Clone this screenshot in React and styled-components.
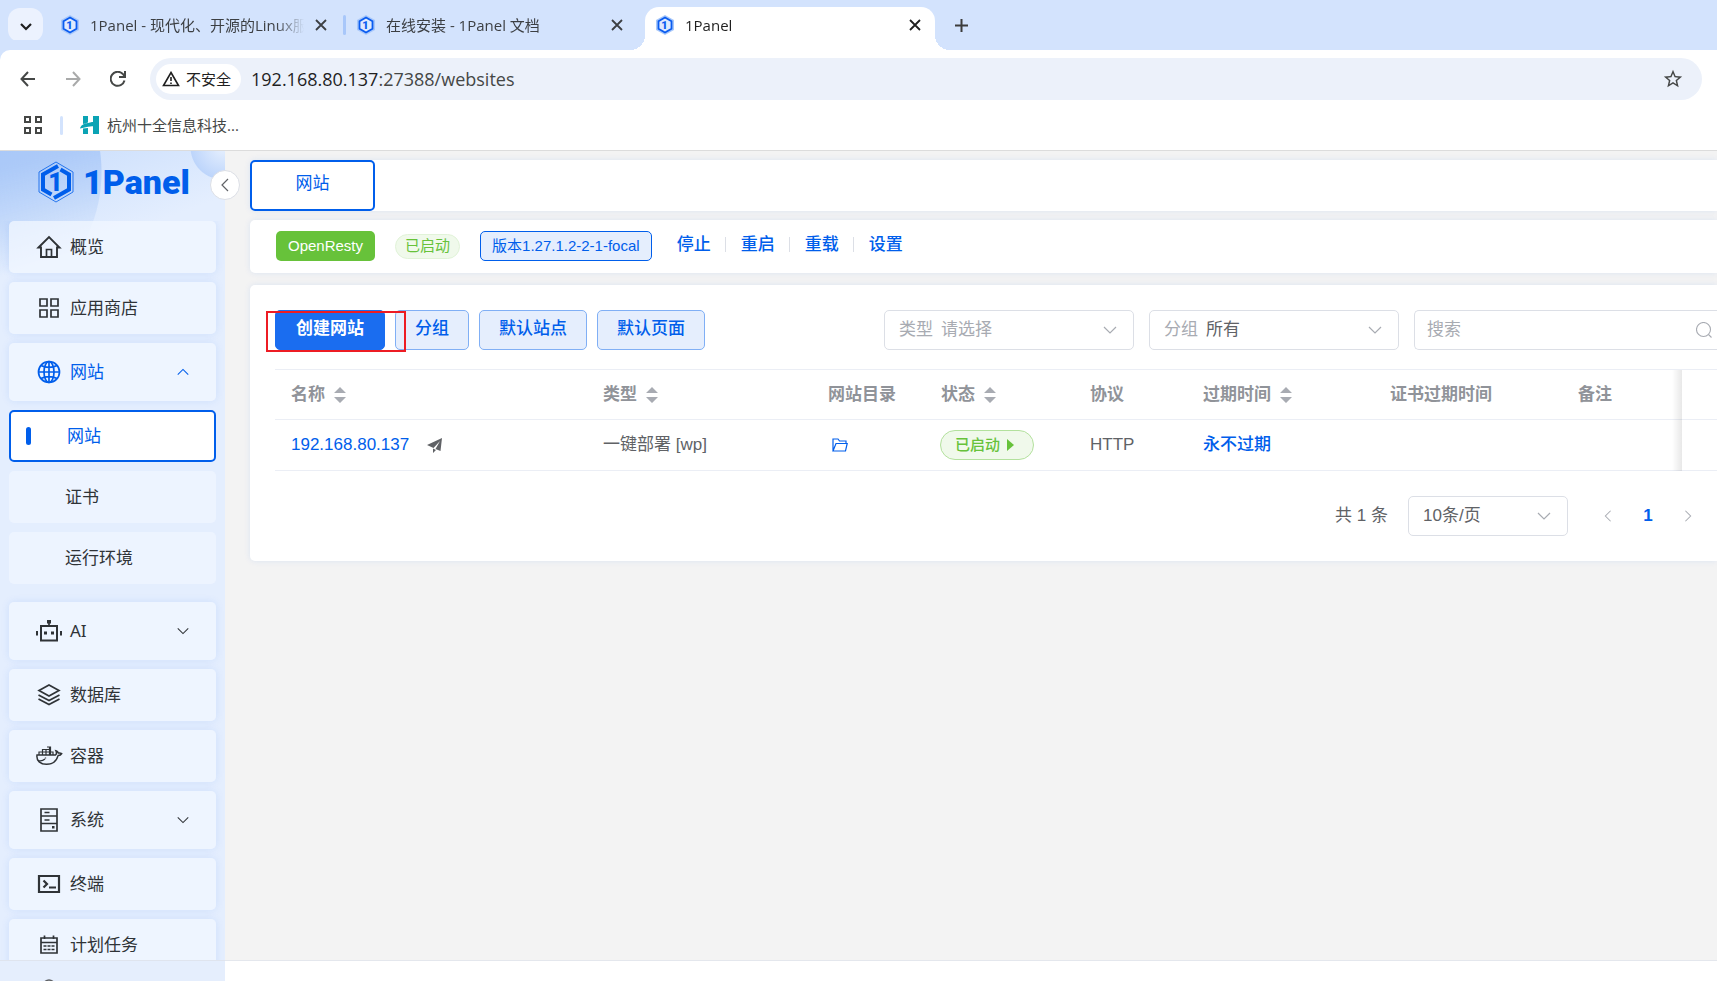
import React, { useState } from "react";
import styled, { createGlobalStyle } from "styled-components";
import { MdStarOutline } from "react-icons/md";

const tabs = [
  { title: "1Panel - 现代化、开源的Linux服", width: 291 },
  { title: "在线安装 - 1Panel 文档", width: 291 },
  { title: "1Panel", width: 290, active: true },
];

const menu = [
  { label: "概览", icon: "home" },
  { label: "应用商店", icon: "apps" },
  { label: "网站", icon: "globe", open: true, children: ["网站", "证书", "运行环境"] },
  { label: "AI", icon: "robot", group: true },
  { label: "数据库", icon: "layers" },
  { label: "容器", icon: "docker" },
  { label: "系统", icon: "server", group: true },
  { label: "终端", icon: "terminal" },
  { label: "计划任务", icon: "calendar" },
];

const columns = [
  { label: "名称", width: 312, sortable: true },
  { label: "类型", width: 225, sortable: true },
  { label: "网站目录", width: 113 },
  { label: "状态", width: 149, sortable: true },
  { label: "协议", width: 113 },
  { label: "过期时间", width: 187, sortable: true },
  { label: "证书过期时间", width: 188 },
  { label: "备注", width: 120 },
  { label: "", width: 35, fixed: true },
];

const icons = {
  home: (
    <>
      <path d="M1.5 12.500 12 2l10.500 10.500H20V22H4v-9.500z" strokeWidth="1.900" />
      <path d="M9.500 22v-7.500h5V22" />
    </>
  ),
  apps: <path d="M3 3h7v7H3zM14 3h7v7h-7zM3 14h7v7H3zM14 14h7v7h-7z" />,
  globe: (
    <>
      <circle cx="12" cy="12" r="10.500" />
      <ellipse cx="12" cy="12" rx="5" ry="10.500" />
      <path d="M12 1.500v21M1.500 12h21M4 5.500c4.500 2.500 11.500 2.500 16 0M4 18.500c4.500-2.500 11.500-2.500 16 0" />
    </>
  ),
  robot: (
    <>
      <path d="M4 7h16v14.500H4z" strokeWidth="2" />
      <path d="M12 7V4" />
      <path d="M10 1h4v3.500h-4zM7 12.500h3v3H7zM14 12.500h3v3h-3zM-1 12h2v4.500h-2zM23 12h2v4.500h-2z" fill="currentColor" stroke="none" />
    </>
  ),
  layers: (
    <>
      <path d="M12 2 22 7.500 12 13 2 7.500z" />
      <path d="M1.500 12 12 17.500 22.500 12M1.500 16 12 21.500 22.500 16" />
    </>
  ),
  docker: (
    <>
      <path d="M0 11h18.500c1-.8 1.300-2.200.4-4.200 1.500.4 2.200 1.400 2.500 2.300 1.200-.3 2.300-.1 3.300.6-.6 1.200-1.900 1.900-3.600 1.900C19.500 17 15.500 20.300 9.500 20.300 3.500 20.300-.8 17 0 11z" strokeWidth="1.500" />
      <path d="M2 11V8h3.500v3M5.500 8V5.500h7V11M9 5.500V11M5.500 8H16v3M12.500 5.500V3H10M12.500 3h1v8" strokeWidth="1.200" />
      <path d="M1 16.500c2.500.8 5 .2 7-1.500M8.500 13.500v1" strokeWidth="1.300" />
    </>
  ),
  server: (
    <>
      <path d="M4 1h16v22H4zM4 8h16M4 15.500h16M7.500 4.500h5M7.500 12h5" />
      <path d="M15 18h2.500v2.500H15z" fill="currentColor" stroke="none" />
    </>
  ),
  terminal: (
    <>
      <path d="M2 4h20v16H2z" strokeWidth="2.200" />
      <path d="m6.500 8.500 3.500 3.500-3.500 3.500M12 15.500h7" strokeWidth="2.200" />
    </>
  ),
  calendar: (
    <>
      <path d="M4 5h16v15H4zM4 9.500h16M7.500 2.500V6M16.500 2.500V6" />
      <path d="M6.500 13h3M10.500 13h3M14.500 13h3M6.500 16.500h3M10.500 16.500h3M14.500 16.500h3" />
    </>
  ),
  user: <circle cx="12" cy="7" r="5" />,
};

const MenuIcon = ({ name }) => (
  <svg width="24" height="24" viewBox="0 0 24 24" fill="none" stroke="currentColor" strokeWidth="1.700" overflow="visible">
    {icons[name]}
  </svg>
);

const arrows = {
  down: "M2 5l6 6 6-6",
  up: "M2 11l6-6 6 6",
  left: "M11 2L5 8l6 6",
  right: "M5 2l6 6-6 6",
};

const Arrow = ({ dir, size = 16 }) => (
  <svg width={size} height={size} viewBox="0 0 16 16" fill="none" stroke="currentColor" strokeWidth="1.200">
    <path d={arrows[dir]} />
  </svg>
);

const Favicon = () => (
  <svg width="18" height="20" viewBox="0 0 18 20">
    <path d="M9 0l9 5v10l-9 5-9-5V5z" fill="#a8c8fa" />
    <path d="M9 2.500l6.500 3.800v7.400L9 17.500l-6.500-3.800V6.300z" fill="#dfeafd" stroke="#0a5cf0" strokeWidth="1.800" />
    <text x="8.500" y="14" textAnchor="middle" fontFamily="Roboto, sans-serif" fontWeight="900" fontSize="11" fill="#0a5cf0">1</text>
  </svg>
);

const LogoMark = () => (
  <svg width="36" height="42" viewBox="0 0 36 42" fill="none" stroke="#005eeb">
    <path d="M18 1l17 10v20L18 41 1 31V11z" strokeWidth="0.800" />
    <path d="M20 5 5 13.500v15l8.500 5M16 37l15-8.500v-15L22.500 8.500" strokeWidth="4" />
    <text x="17.500" y="30" textAnchor="middle" fontFamily="Roboto, sans-serif" fontWeight="900" fontSize="25" fill="#005eeb" stroke="none">1</text>
  </svg>
);

const CloseIcon = () => (
  <svg width="12" height="12" viewBox="0 0 12 12" stroke="currentColor" strokeWidth="1.800">
    <path d="M1 1l10 10M11 1L1 11" />
  </svg>
);

const Sort = () => (
  <svg width="12" height="16" viewBox="0 0 12 16" fill="#a8abb2">
    <path d="M6 0l6 6H0zM6 16l6-6H0z" />
  </svg>
);

const BrowserTabs = () => (
  <TabStrip>
    <TabSearch aria-label="搜索标签页">
      <svg width="12" height="8" viewBox="0 0 12 8" fill="none" stroke="#1f1f1f" strokeWidth="2.200">
        <path d="M1 1l5 5 5-5" />
      </svg>
    </TabSearch>
    {tabs.map((tab, i) => (
      <React.Fragment key={tab.title}>
        {i === 1 && <TabDivider />}
        <BrowserTab $width={tab.width} $active={tab.active}>
          <Favicon />
          <TabTitle>{tab.title}</TabTitle>
          <IconButton aria-label="关闭">
            <CloseIcon />
          </IconButton>
        </BrowserTab>
      </React.Fragment>
    ))}
    <NewTab aria-label="新标签页">
      <svg width="13" height="13" viewBox="0 0 13 13" stroke="#3c3c3c" strokeWidth="2">
        <path d="M6.500 0v13M0 6.500h13" />
      </svg>
    </NewTab>
  </TabStrip>
);

const AddressBar = () => (
  <Toolbar>
    <IconButton aria-label="后退">
      <svg width="16" height="16" viewBox="0 0 16 16" fill="none" stroke="#454746" strokeWidth="2">
        <path d="M15 8H2M8 1L1.500 8 8 15" />
      </svg>
    </IconButton>
    <IconButton aria-label="前进" disabled>
      <svg width="16" height="16" viewBox="0 0 16 16" fill="none" stroke="#a9aaaa" strokeWidth="2">
        <path d="M1 8h13M8 1l6.500 7L8 15" />
      </svg>
    </IconButton>
    <IconButton aria-label="重新加载">
      <svg width="16" height="16" viewBox="0 0 16 16" fill="none" stroke="#454746" strokeWidth="2">
        <path d="M14.500 9.500A7 7 0 1 1 13 3.200L14.500 5M15 0v6H9" />
      </svg>
    </IconButton>
    <Omnibox>
      <SiteChip>
        <svg width="18" height="16" viewBox="0 0 18 16" fill="none" stroke="#1f1f1f" strokeWidth="1.600">
          <path d="M9 1.500L16.500 14.500h-15zM9 6v4M9 11.500v1.500" />
        </svg>
        不安全
      </SiteChip>
      <Url>
        192.168.80.137<span>:27388/websites</span>
      </Url>
      <IconButton aria-label="收藏">
        <MdStarOutline size={22} />
      </IconButton>
    </Omnibox>
  </Toolbar>
);

const Bookmarks = () => (
  <BookmarkBar>
    <svg width="18" height="18" viewBox="0 0 18 18" fill="none" stroke="#454746" strokeWidth="2">
      <path d="M1 1h5v5H1zM12 1h5v5h-5zM1 12h5v5H1zM12 12h5v5h-5z" />
    </svg>
    <BookmarkDivider />
    <BookmarkLink href="#hz">
      <svg width="19" height="18" viewBox="0 0 19 18" fill="#0aa3b4">
        <path d="M3 0h5v6.500L3 8zM3 12.500l5-.5v6H3zM13 0h6v18h-6zM0 12.500C1 9 4 7.500 8 7l6-1.500V10L8 10.800z" />
      </svg>
      杭州十全信息科技...
    </BookmarkLink>
  </BookmarkBar>
);

const SideMenu = () => {
  const [current, setCurrent] = useState("网站");
  return (
    <Sidebar>
      <Brand>
        <LogoMark />
        1Panel
      </Brand>
      <Collapse aria-label="收起菜单">
        <Arrow dir="left" />
      </Collapse>
      <MenuList>
        {menu.map((item) => (
          <React.Fragment key={item.label}>
            <MenuItem $tall={item.group || item.open} $open={item.open}>
              <MenuIconBox>
                <MenuIcon name={item.icon} />
              </MenuIconBox>
              <span>{item.label}</span>
              {item.open && <Arrow dir="up" size={14} />}
              {item.group && <Arrow dir="down" size={14} />}
            </MenuItem>
            {item.children && (
              <SubMenu>
                {item.children.map((label) => (
                  <SubItem key={label} $active={label === current} onClick={() => setCurrent(label)}>
                    {label}
                  </SubItem>
                ))}
              </SubMenu>
            )}
          </React.Fragment>
        ))}
      </MenuList>
      <SideFooter>
        <MenuIcon name="user" />
      </SideFooter>
    </Sidebar>
  );
};

const SiteTable = () => (
  <Table>
    <colgroup>
      {columns.map((col) => (
        <Col key={col.label} $width={col.width} />
      ))}
    </colgroup>
    <thead>
      <tr>
        {columns.map((col) => (
          <HeadCell key={col.label} $fixed={col.fixed}>
            <HeadLabel>
              {col.label}
              {col.sortable && <Sort />}
            </HeadLabel>
          </HeadCell>
        ))}
      </tr>
    </thead>
    <tbody>
      <tr>
        <Cell>
          <NameCell>
            <SiteLink href="#site">192.168.80.137</SiteLink>
            <svg width="15" height="15" viewBox="0 0 15 15" fill="#606266">
              <path d="M15 0L13.500 13 8.500 11 13 3 6.500 10 0 7zM6 10.500l3 1.500-3 3z" />
            </svg>
          </NameCell>
        </Cell>
        <Cell>一键部署 [wp]</Cell>
        <Cell>
          <FolderButton aria-label="网站目录">
            <svg width="16" height="14" viewBox="0 0 16 14" fill="none" stroke="#005eeb" strokeWidth="1.200">
              <path d="M1 13V1h5l1.500 2H14v2M1 13L4 5.500h11.200L13.500 13z" />
            </svg>
          </FolderButton>
        </Cell>
        <Cell>
          <StatusButton>
            已启动
            <svg width="7" height="12" viewBox="0 0 7 12" fill="#67c23a">
              <path d="M0 0l7 6-7 6z" />
            </svg>
          </StatusButton>
        </Cell>
        <Cell>HTTP</Cell>
        <Cell>
          <SiteLink href="#expire" $strong>永不过期</SiteLink>
        </Cell>
        <Cell />
        <Cell />
        <Cell $fixed />
      </tr>
    </tbody>
  </Table>
);

const App = () => {
  return (
    <Page>
      <GlobalStyle />
      <BrowserTabs />
      <Chrome>
        <AddressBar />
        <Bookmarks />
      </Chrome>
      <Body>
        <SideMenu />
        <Main>
          <Content>
            <RouterBar>
              <RouterButton>网站</RouterButton>
            </RouterBar>
            <AppStatus>
              <AppTag>OpenResty</AppTag>
              <RunningTag>已启动</RunningTag>
              <VersionTag>版本1.27.1.2-2-1-focal</VersionTag>
              <Actions>
                <ActionLink>停止</ActionLink>
                <ActionLink>重启</ActionLink>
                <ActionLink>重载</ActionLink>
                <ActionLink>设置</ActionLink>
              </Actions>
            </AppStatus>
            <Card>
              <Tools>
                <Highlight>
                  <Button $primary>创建网站</Button>
                </Highlight>
                <Button>分组</Button>
                <Button>默认站点</Button>
                <Button>默认页面</Button>
                <Filters>
                  <SelectBox $width={250}>
                    <span>类型</span>
                    <Select $muted defaultValue="">
                      <option value="">请选择</option>
                    </Select>
                    <Arrow dir="down" />
                  </SelectBox>
                  <SelectBox $width={250}>
                    <span>分组</span>
                    <Select defaultValue="all">
                      <option value="all">所有</option>
                    </Select>
                    <Arrow dir="down" />
                  </SelectBox>
                  <SearchBox>
                    <input placeholder="搜索" aria-label="搜索" />
                    <svg width="16" height="16" viewBox="0 0 16 16" fill="none" stroke="#a8abb2" strokeWidth="1.100">
                      <circle cx="7.500" cy="7.500" r="7" />
                      <path d="M12.500 12.500l3 3" />
                    </svg>
                  </SearchBox>
                </Filters>
              </Tools>
              <SiteTable />
              <Pagination>
                <span>共 1 条</span>
                <SelectBox $width={160}>
                  <Select aria-label="每页条数" defaultValue="10">
                    <option value="10">10条/页</option>
                  </Select>
                  <Arrow dir="down" />
                </SelectBox>
                <Pager>
                  <PageButton aria-label="上一页" disabled>
                    <Arrow dir="left" size={14} />
                  </PageButton>
                  <PageButton $current>1</PageButton>
                  <PageButton aria-label="下一页" disabled>
                    <Arrow dir="right" size={14} />
                  </PageButton>
                </Pager>
              </Pagination>
            </Card>
          </Content>
          <Footer />
        </Main>
      </Body>
    </Page>
  );
};

export default App;

const GlobalStyle = createGlobalStyle`
  * {
    box-sizing: border-box;
  }
  body {
    margin: 0;
    font-family: "Liberation Sans", "Noto Sans CJK SC", sans-serif;
    font-size: 17px;
    line-height: 24px;
    color: #606266;
  }
  button, input, select {
    font: inherit;
    color: inherit;
  }
  button {
    cursor: pointer;
  }
  svg {
    flex-shrink: 0;
  }
`;

const Page = styled.div`
  height: 100vh;
  display: flex;
  flex-direction: column;
  overflow: hidden;
`;

const TabStrip = styled.header`
  height: 50px;
  flex-shrink: 0;
  display: flex;
  align-items: center;
  padding: 0 8px;
  background: #d3e3fd;
  font-family: "Open Sans", "Noto Sans CJK SC", sans-serif;
  font-size: 15px;
  color: #3c3f43;
`;

const TabSearch = styled.button`
  width: 35px;
  height: 34px;
  margin-right: 7px;
  border: none;
  border-radius: 12px;
  background: #ecf2fe;
`;

const BrowserTab = styled.div`
  position: relative;
  display: flex;
  align-items: center;
  gap: 11px;
  width: ${(p) => p.$width}px;
  height: 43px;
  margin-left: ${(p) => (p.$active ? 8 : 0)}px;
  align-self: flex-end;
  padding: 0 14px 7px 11px;
  background: ${(p) => (p.$active ? "#fff" : "transparent")};
  color: ${(p) => (p.$active ? "#1f1f1f" : "inherit")};
  border-radius: 14px 14px 0 0;
  &::before,
  &::after {
    content: "";
    display: ${(p) => (p.$active ? "block" : "none")};
    position: absolute;
    bottom: 0;
    width: 15px;
    height: 15px;
  }
  &::before {
    right: 100%;
    background: radial-gradient(circle at 0 0, transparent 15px, #fff 15px);
  }
  &::after {
    left: 100%;
    background: radial-gradient(circle at 100% 0, transparent 15px, #fff 15px);
  }
`;

const TabTitle = styled.span`
  flex: 1;
  overflow: hidden;
  white-space: nowrap;
  mask-image: linear-gradient(to right, #000 calc(100% - 28px), transparent);
`;

const TabDivider = styled.i`
  width: 3px;
  height: 20px;
  margin-left: 2px;
  background: #a8c7fa;
  border-radius: 2px;
`;

const IconButton = styled.button`
  display: flex;
  padding: 0;
  border: none;
  background: none;
`;

const NewTab = styled(IconButton)`
  margin-left: 20px;
`;

const Chrome = styled.div`
  flex-shrink: 0;
  background: #fff;
  border-bottom: 1px solid #dcdcdc;
  font-family: "Open Sans", "Noto Sans CJK SC", sans-serif;
  box-shadow: -10px -10px 0 #d3e3fd;
  border-radius: 10px 0 0 0;
`;

const Toolbar = styled.div`
  display: flex;
  align-items: center;
  gap: 29px;
  padding: 8px 15px 0 20px;
`;

const Omnibox = styled.div`
  flex: 1;
  display: flex;
  align-items: center;
  height: 42px;
  margin-left: -5px;
  padding: 0 18px 0 6px;
  border-radius: 21px;
  background: #ecf1fa;
  color: #454746;
`;

const SiteChip = styled.button`
  display: flex;
  align-items: center;
  gap: 6px;
  height: 30px;
  padding: 0 10px 0 6px;
  border: none;
  border-radius: 15px;
  background: #fff;
  color: #1f1f1f;
  font-size: 15px;
`;

const Url = styled.span`
  flex: 1;
  margin-left: 10px;
  font-size: 18px;
  color: #1f1f1f;
  span {
    color: #454746;
  }
`;

const BookmarkBar = styled.div`
  display: flex;
  align-items: center;
  height: 50px;
  padding: 0 24px;
`;

const BookmarkDivider = styled.i`
  width: 3px;
  height: 19px;
  margin: 0 17px 0 18px;
  border-radius: 2px;
  background: #d3e3fd;
`;

const BookmarkLink = styled.a`
  display: flex;
  align-items: center;
  gap: 8px;
  color: #454746;
  font-size: 15px;
  text-decoration: none;
`;

const Body = styled.div`
  flex: 1;
  min-height: 0;
  display: flex;
`;

const Sidebar = styled.aside`
  position: relative;
  display: flex;
  flex-direction: column;
  width: 225px;
  flex-shrink: 0;
  background:
    radial-gradient(circle at 223px -4px, transparent 32px, #e4eefe 33px) right top / 45px 40px no-repeat,
    linear-gradient(160deg, #c8ddfc 0, #e4eefe 120px);
  background:
    radial-gradient(circle at 223px -4px, #e2edfe 4px, #bdd5fb 32px, transparent 33px),
    linear-gradient(160deg, #c8ddfc 0, #e4eefe 120px);
  &::before {
    content: "";
    position: absolute;
    left: 0;
    top: 0;
    width: 102px;
    height: 150px;
    background: radial-gradient(circle at -48px 21px, rgba(150, 187, 245, 0.6) 149px, transparent 150px);
    mask-image: linear-gradient(165deg, #000 10%, transparent 70%);
  }
`;

const Brand = styled.div`
  position: relative;
  display: flex;
  align-items: center;
  gap: 9px;
  height: 70px;
  padding: 0 0 8px 38px;
  color: #005eeb;
  font-family: Roboto, sans-serif;
  font-size: 34px;
  font-weight: 900;
`;

const Collapse = styled.button`
  position: absolute;
  z-index: 2;
  top: 19px;
  right: -15px;
  display: flex;
  align-items: center;
  justify-content: center;
  width: 30px;
  height: 30px;
  padding: 0;
  border: 1px solid #dcdfe6;
  border-radius: 50%;
  background: #fff;
  color: #606266;
`;

const MenuList = styled.nav`
  position: relative;
  flex: 1;
  min-height: 0;
  overflow: hidden;
  display: flex;
  flex-direction: column;
  gap: 9px;
  padding: 0 9px;
  color: #2f3337;
  font-family: "Noto Sans", "Noto Sans CJK SC", sans-serif;
`;

const MenuItem = styled.button`
  display: flex;
  align-items: center;
  flex-shrink: 0;
  height: ${(p) => (p.$tall ? 58 : 52)}px;
  padding: 0 26px 0 27px;
  border: none;
  border-radius: 5px;
  background: rgba(242, 247, 255, 0.75);
  box-shadow: 0 0 8px rgba(0, 94, 235, 0.1);
  color: ${(p) => (p.$open ? "#005eeb" : "inherit")};
  text-align: left;
  span {
    flex: 1;
  }
`;

const MenuIconBox = styled.i`
  display: flex;
  justify-content: center;
  width: 26px;
  margin-right: 8px;
`;

const SubMenu = styled.div`
  display: flex;
  flex-direction: column;
  gap: 9px;
  padding-bottom: 9px;
`;

const SubItem = styled.button`
  display: flex;
  align-items: center;
  height: 52px;
  padding: 0 0 0 ${(p) => (p.$active ? 15 : 56)}px;
  border: ${(p) => (p.$active ? "2px solid #005eeb" : "none")};
  border-radius: 5px;
  background: ${(p) => (p.$active ? "#fff" : "#edf4ff")};
  color: ${(p) => (p.$active ? "#005eeb" : "inherit")};
  &::before {
    content: "";
    display: ${(p) => (p.$active ? "block" : "none")};
    width: 5px;
    height: 18px;
    margin-right: 36px;
    border-radius: 3px;
    background: #005eeb;
  }
`;

const SideFooter = styled.div`
  height: 21px;
  flex-shrink: 0;
  padding: 17px 0 0 37px;
  border-top: 1px solid #dfe4ee;
  background: #e5eefd;
  overflow: hidden;
`;

const Main = styled.main`
  flex: 1;
  min-width: 0;
  display: flex;
  flex-direction: column;
  background: #f3f3f3;
`;

const Content = styled.div`
  flex: 1;
  min-height: 0;
  padding: 9px 0 0 25px;
`;

const Panel = styled.section`
  background: #fff;
  border-radius: 5px 0 0 5px;
  box-shadow: 0 0 6px rgba(0, 94, 235, 0.1);
`;

const RouterBar = styled(Panel)`
  display: flex;
  margin-bottom: 9px;
`;

const RouterButton = styled.button`
  width: 125px;
  height: 51px;
  padding: 0 0 3px;
  border: 2px solid #005eeb;
  border-radius: 5px;
  background: #fff;
  color: #005eeb;
`;

const AppStatus = styled(Panel)`
  display: flex;
  align-items: center;
  gap: 20px;
  height: 53px;
  margin-bottom: 12px;
  padding: 0 0 1px 26px;
  font-size: 15px;
`;

const AppTag = styled.span`
  display: flex;
  align-items: center;
  justify-content: center;
  height: 30px;
  padding: 0 12px;
  border-radius: 5px;
  background: #67c23a;
  color: #fff;
`;

const RunningTag = styled.span`
  display: flex;
  align-items: center;
  height: 25px;
  padding: 0 9px;
  border: 1px solid #e1f3d8;
  border-radius: 13px;
  background: #f0f9eb;
  color: #67c23a;
`;

const VersionTag = styled(AppTag)`
  padding: 0 11px;
  border: 1px solid #005eeb;
  background: #e5eefd;
  color: #005eeb;
`;

const Actions = styled.div`
  display: flex;
  align-items: center;
  margin-left: -10px;
`;

const ActionLink = styled.button`
  display: flex;
  align-items: center;
  padding: 0 0 3px 15px;
  border: none;
  background: none;
  color: #005eeb;
  font-size: 17px;
  font-weight: 500;
  &:not(:last-child)::after {
    content: "";
    width: 1px;
    height: 15px;
    margin-left: 14px;
    background: #dcdfe6;
  }
`;

const Card = styled(Panel)`
  padding: 25px 0 25px 25px;
`;

const Tools = styled.div`
  display: flex;
  gap: 10px;
  margin-bottom: 19px;
`;

const Button = styled.button`
  height: 40px;
  padding: 0 ${(p) => (p.$primary ? 20 : 19)}px 3px;
  border: 1px solid ${(p) => (p.$primary ? "#1a6df0" : "#80aff5")};
  border-radius: 5px;
  background: ${(p) => (p.$primary ? "#1a6df0" : "#e5eefd")};
  color: ${(p) => (p.$primary ? "#fff" : "#005eeb")};
  font-weight: ${(p) => (p.$primary ? 700 : 500)};
  white-space: nowrap;
`;

const Highlight = styled.div`
  position: relative;
  &::after {
    content: "";
    position: absolute;
    inset: 1px -21px -2px -9px;
    border: 2px solid #ed1c24;
    pointer-events: none;
  }
`;

const Filters = styled.div`
  flex: 1;
  display: flex;
  justify-content: flex-end;
  gap: 15px;
`;

const SelectBox = styled.label`
  display: flex;
  align-items: center;
  width: ${(p) => p.$width}px;
  height: 40px;
  padding: 0 15px 0 14px;
  border: 1px solid #dcdfe6;
  border-radius: 5px;
  background: #fff;
  color: #a8abb2;
  span {
    margin-right: 8px;
    white-space: nowrap;
  }
`;

const Select = styled.select`
  flex: 1;
  min-width: 0;
  padding: 0;
  border: none;
  appearance: none;
  background: none;
  outline: none;
  color: ${(p) => (p.$muted ? "#a8abb2" : "#606266")};
`;

const SearchBox = styled.div`
  display: flex;
  align-items: center;
  width: 303px;
  height: 40px;
  padding: 0 5px 0 12px;
  border: 1px solid #dcdfe6;
  border-right: none;
  border-radius: 5px 0 0 5px;
  input {
    flex: 1;
    min-width: 0;
    padding: 0;
    border: none;
    outline: none;
    background: none;
  }
  input::placeholder {
    color: #a8abb2;
  }
`;

const Table = styled.table`
  width: 100%;
  table-layout: fixed;
  border-collapse: separate;
  border-spacing: 0;
  border-top: 1px solid #ebeef5;
`;

const Col = styled.col`
  width: ${(p) => p.$width}px;
`;

const Cell = styled.td`
  position: relative;
  height: 51px;
  padding: 0 0 0 16px;
  border-bottom: 1px solid #ebeef5;
  white-space: nowrap;
  &::before {
    content: "";
    display: ${(p) => (p.$fixed ? "block" : "none")};
    position: absolute;
    top: 0;
    bottom: -1px;
    right: 100%;
    width: 10px;
    background: linear-gradient(to left, rgba(0, 0, 0, 0.09), transparent);
  }
`;

const HeadCell = styled(Cell).attrs({ as: "th" })`
  height: 50px;
  color: #909399;
  font-weight: 700;
  text-align: left;
`;

const HeadLabel = styled.div`
  display: flex;
  align-items: center;
  gap: 9px;
`;

const NameCell = styled.div`
  display: flex;
  align-items: center;
  gap: 18px;
`;

const SiteLink = styled.a`
  color: #005eeb;
  text-decoration: none;
  font-weight: ${(p) => (p.$strong ? 500 : 400)};
`;

const FolderButton = styled(IconButton)`
  margin-left: 4px;
`;

const StatusButton = styled.button`
  display: flex;
  align-items: center;
  gap: 7px;
  height: 30px;
  margin-left: -1px;
  padding: 0 19px 0 14px;
  border: 1px solid #b3e19d;
  border-radius: 15px;
  background: #f0f9eb;
  color: #67c23a;
  font-size: 15px;
  font-weight: 500;
`;

const Pagination = styled.div`
  display: flex;
  align-items: center;
  justify-content: flex-end;
  gap: 20px;
  margin-top: 25px;
  padding-right: 9px;
`;

const Pager = styled.div`
  display: flex;
`;

const PageButton = styled.button`
  display: flex;
  align-items: center;
  justify-content: center;
  width: 40px;
  height: 40px;
  padding: 0;
  border: none;
  background: none;
  color: ${(p) => (p.$current ? "#005eeb" : "#a8abb2")};
  font-weight: ${(p) => (p.$current ? 700 : 400)};
`;

const Footer = styled.footer`
  height: 21px;
  flex-shrink: 0;
  border-top: 1px solid #e4e7ed;
  background: #fff;
`;
